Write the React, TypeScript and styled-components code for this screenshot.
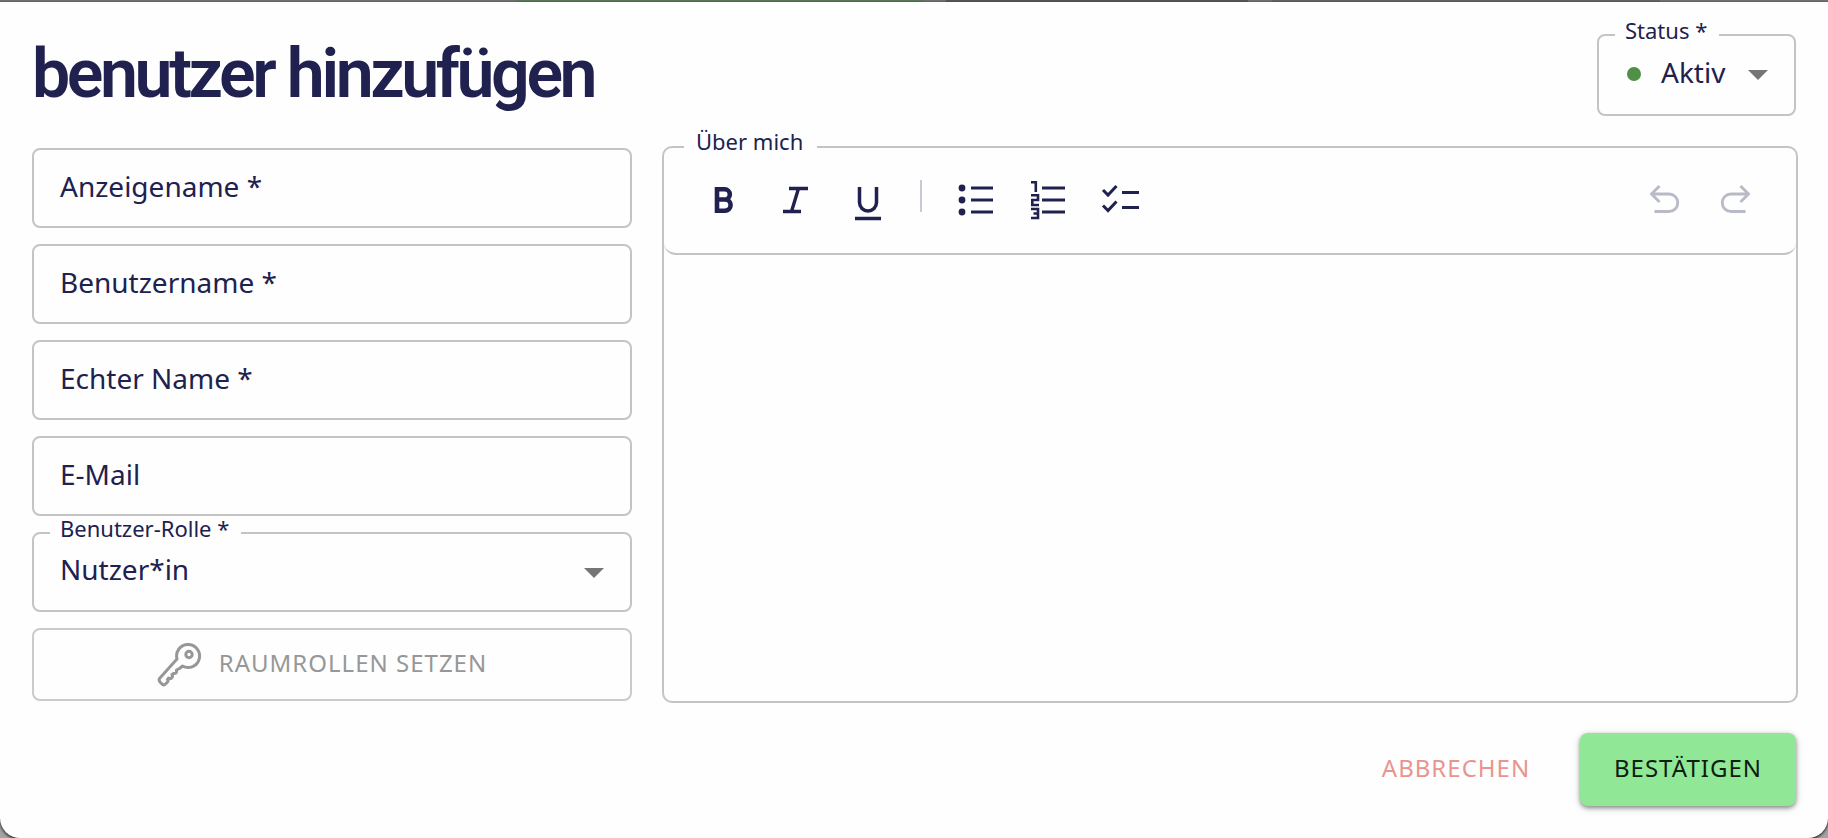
import React from "react";
import styled, { createGlobalStyle } from "styled-components";

const navy = "#20214f";
const line = "#c4c4c4";
const sans = '"Noto Sans", "Open Sans", sans-serif';

const GlobalStyle = createGlobalStyle`
  *, *::before, *::after { box-sizing: border-box; }
  html, body, #root { height: 100%; }
  body {
    margin: 0;
    background: #757373;
    color: ${navy};
    font-family: ${sans};
  }
  button, input, select { font: inherit; color: inherit; }
`;

const Backdrop = styled.div`
  min-height: 100%;
  padding-top: 2px;
  display: flex;
  background: linear-gradient(#0000 2px, #a3a3a3 2px),
    linear-gradient(90deg, #757373 0 516px, #5c7a5c 516px 924px, #757373 924px 946px, #5b5a5a 946px 1248px, #757373 1248px 1272px, #666464 1272px 1660px, #757373 1660px);
`;

const Dialog = styled.form`
  flex: 1;
  display: flex;
  flex-direction: column;
  padding: 32px;
  background: #fefefe;
  border-radius: 0 0 20px 20px;
  box-shadow: 0 1px 3px #000;
`;

const Header = styled.header`
  display: flex;
  justify-content: space-between;
  align-items: flex-start;
  height: 112px;
`;

const Title = styled.h1`
  margin: 0;
  font-family: Roboto, ${sans};
  font-size: 68px;
  line-height: 80px;
  font-weight: 600;
  letter-spacing: -0.05em;
`;

const Content = styled.div`
  flex: 1;
  display: grid;
  grid-template-columns: minmax(0, 600px) minmax(0, 1fr);
  gap: 30px;
  margin-right: -2px;
`;

const Fields = styled.div`
  display: flex;
  flex-direction: column;
  gap: 16px;
  padding-top: 2px;
`;

const Field = styled.div`
  position: relative;
  height: 80px;
`;

const StatusField = styled(Field)`
  width: 199px;
  height: 82px;
`;

const TextInput = styled.input`
  display: block;
  width: 100%;
  height: 100%;
  padding: 0 28px;
  border: 2px solid ${line};
  border-radius: 8px;
  background: transparent;
  font-size: 28px;
`;

const InnerLabel = styled.label`
  position: absolute;
  left: 28px;
  top: 18px;
  font-size: 28px;
  line-height: 40px;
  pointer-events: none;
`;

const NotchLabel = styled.label`
  position: absolute;
  z-index: 1;
  left: 18px;
  top: -16px;
  padding: 0 12px 0 10px;
  background: #fefefe;
  font-size: 22px;
  line-height: 24px;
`;

const Select = styled.select<{ $indent?: number }>`
  display: block;
  width: 100%;
  height: 100%;
  padding: 0 60px 6px ${(p) => p.$indent ?? 26}px;
  border: 2px solid ${line};
  border-radius: 8px;
  background: transparent;
  appearance: none;
  font-size: 28px;
`;

const Arrow = styled.svg`
  position: absolute;
  right: 28px;
  top: 36px;
  width: 20px;
  height: 10px;
  fill: #757575;
  pointer-events: none;
`;

const StatusDot = styled.span`
  position: absolute;
  left: 30px;
  top: 33px;
  width: 14px;
  height: 14px;
  border-radius: 50%;
  background: #4f8f46;
`;

const RoleButton = styled.button`
  display: flex;
  align-items: center;
  justify-content: center;
  gap: 18px;
  height: 73px;
  padding: 0 20px 0 0;
  border: 2px solid #cbcbcb;
  border-radius: 8px;
  background: transparent;
  font-size: 24px;
  line-height: 32px;
  letter-spacing: 1px;
  text-transform: uppercase;

  &:disabled { color: #979797; }
`;

const RoleText = styled.span`
  padding-bottom: 4px;
`;

const Editor = styled.section`
  position: relative;
  display: flex;
  flex-direction: column;
  height: 557px;
  border: 2px solid ${line};
  border-radius: 10px;
`;

const EditorLabel = styled(NotchLabel)`
  left: 20px;
  top: -24px;
  padding: 0 14px 0 12px;
  line-height: 34px;
`;

const Toolbar = styled.div`
  display: flex;
  align-items: center;
  gap: 32px;
  height: 107px;
  padding: 0 40px 2px;
  border-bottom: 2px solid ${line};
  border-radius: 0 0 12px 12px;
`;

const ToolButton = styled.button`
  display: grid;
  place-items: center;
  width: 40px;
  height: 40px;
  padding: 0;
  border: 0;
  background: transparent;

  &:disabled { color: #b9bac8; }
`;

const Icon = styled.svg<{ $weight: number }>`
  width: 40px;
  height: 40px;
  overflow: visible;
  fill: none;
  stroke: currentColor;
  stroke-width: ${(p) => p.$weight};
`;

const KeyIcon = styled.svg`
  width: 44px;
  height: 44px;
  fill: none;
  stroke: currentColor;
  stroke-width: 3;
  stroke-linejoin: round;
`;

const Divider = styled.span`
  width: 2px;
  height: 32px;
  margin-bottom: 8px;
  background: #c9c9d3;
`;

const UndoGroup = styled.div`
  display: flex;
  gap: 32px;
  margin-left: auto;
`;

const TextArea = styled.div`
  flex: 1;
  padding: 24px;
  outline: none;
  font-size: 28px;
`;

const Footer = styled.footer`
  display: flex;
  justify-content: flex-end;
  gap: 16px;
  padding-top: 30px;
`;

const Action = styled.button<{ $primary?: boolean }>`
  min-width: 216px;
  height: 73px;
  padding: 0 24px 4px;
  border: 0;
  border-radius: 8px;
  background: ${(p) => (p.$primary ? "#90e896" : "transparent")};
  box-shadow: ${(p) => (p.$primary ? "0 2px 4px #0006, 0 2px 10px #0002" : "none")};
  color: ${(p) => (p.$primary ? "#0f1c10" : "#ea9490")};
  font-size: 24px;
  letter-spacing: 1px;
  text-transform: uppercase;
`;

const textFields = [
  { id: "display", label: "Anzeigename *" },
  { id: "user", label: "Benutzername *" },
  { id: "real", label: "Echter Name *" },
  { id: "mail", label: "E-Mail" },
];

type Tool = { name: string; path: string; weight: number; dots?: boolean; digits?: string };

const styleTools: Tool[] = [
  { name: "Fett", weight: 4.6, path: "M13 9.300v21.400h8a5.600 5.600 0 0 0 0-11.200h-8M10.700 9.300h10a5 5 0 0 1 0 10.200M10.700 30.700H15" },
  { name: "Kursiv", weight: 3.4, path: "M13 8.500h19M7 31.500h18M22.500 8.500l-7 23" },
  { name: "Unterstrichen", weight: 3.5, path: "M11.500 7v15.500a8.500 8.500 0 0 0 17 0V7M7 38.500h26" },
];

const listTools: Tool[] = [
  { name: "Liste", weight: 3, dots: true, path: "M17 8h22M17 20h22M17 32h22" },
  {
    name: "Nummerierte Liste",
    weight: 3,
    path: "M16 8h23M16 20h23M16 32h23",
    digits: "M5 2.200h4.800V12M5 15.200h7v4.800H6.300v5H13M5 29h7v9H5M7.500 33.500H12",
  },
  { name: "Checkliste", weight: 3, path: "M5 10l5 5 8.500-9M5 25.500l5 5 8.500-9M24 12.500h17M24 27.500h17" },
];

const historyTools: Tool[] = [
  { name: "Rückgängig", weight: 2.8, path: "M15.500 6l-8 8 8 8M7.500 14H25a8.750 8.750 0 0 1 0 17.500H10.500" },
  { name: "Wiederholen", weight: 2.8, path: "M24.500 6l8 8-8 8M32.500 14H15a8.750 8.750 0 0 0 0 17.500h14.500" },
];

const ToolItem = ({ tool, disabled }: { tool: Tool; disabled?: boolean }) => (
  <ToolButton type="button" aria-label={tool.name} disabled={disabled}>
    <Icon viewBox="0 0 40 40" $weight={tool.weight}>
      <path d={tool.path} />
      {tool.digits && <path d={tool.digits} strokeWidth={2.6} />}
      {tool.dots && [8, 20, 32].map((y) => (
        <circle key={y} cx={8} cy={y} r={3.4} fill="currentColor" stroke="none" />
      ))}
    </Icon>
  </ToolButton>
);

const Caret = () => (
  <Arrow viewBox="0 0 20 10"><path d="M0 0h20L10 10z" /></Arrow>
);

export default function App() {
  return (
    <>
      <GlobalStyle />
      <Backdrop>
        <Dialog onSubmit={(e) => e.preventDefault()}>
          <Header>
            <Title>benutzer hinzufügen</Title>
            <StatusField>
              <NotchLabel htmlFor="status">Status *</NotchLabel>
              <StatusDot />
              <Select id="status" $indent={62}><option>Aktiv</option></Select>
              <Caret />
            </StatusField>
          </Header>
          <Content>
            <Fields>
              {textFields.map((f) => (
                <Field key={f.id}>
                  <TextInput id={f.id} />
                  <InnerLabel htmlFor={f.id}>{f.label}</InnerLabel>
                </Field>
              ))}
              <Field>
                <NotchLabel htmlFor="role">Benutzer-Rolle *</NotchLabel>
                <Select id="role"><option>Nutzer*in</option></Select>
                <Caret />
              </Field>
              <RoleButton type="button" disabled>
                <KeyIcon viewBox="0 0 44 44">
                  <path d="M20 16L2.500 35.500Q1.500 37 3 39l2.500 2.500q1.500 1 3-.5l2-2q1-1 0-2.500l1-1.500q2 1.500 3.500-.5 1-1.500 0-3l1.500-1q2.500.5 3-1.500v-2l3-1.500 3-2.500A11.500 11.500 0 1 0 20 16z" />
                  <circle cx="32" cy="11.500" r="3.200" />
                </KeyIcon>
                <RoleText>Raumrollen setzen</RoleText>
              </RoleButton>
            </Fields>
            <Editor>
              <EditorLabel as="span" id="about">Über mich</EditorLabel>
              <Toolbar>
                {styleTools.map((t) => <ToolItem key={t.name} tool={t} />)}
                <Divider />
                {listTools.map((t) => <ToolItem key={t.name} tool={t} />)}
                <UndoGroup>
                  {historyTools.map((t) => <ToolItem key={t.name} tool={t} disabled />)}
                </UndoGroup>
              </Toolbar>
              <TextArea contentEditable role="textbox" aria-labelledby="about" />
            </Editor>
          </Content>
          <Footer>
            <Action type="button">Abbrechen</Action>
            <Action type="submit" $primary>Bestätigen</Action>
          </Footer>
        </Dialog>
      </Backdrop>
    </>
  );
}
